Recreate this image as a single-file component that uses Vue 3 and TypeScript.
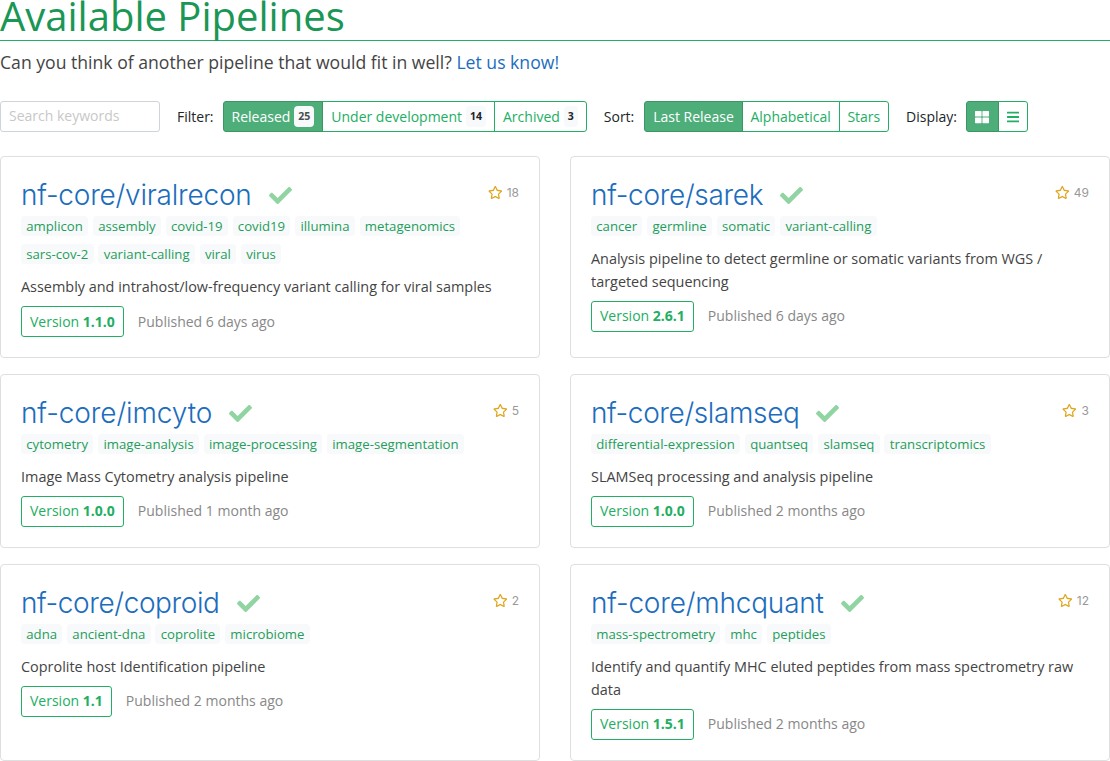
<script setup lang="ts">
interface Pipeline {
  name: string
  tracking: number
  stars: number
  tags: string[]
  description: string
  version: string
  published: string
}

const filters = [
  { label: 'Released', count: 25, active: true },
  { label: 'Under development', count: 14, active: false },
  { label: 'Archived', count: 3, active: false },
]

const sorts = [
  { label: 'Last Release', active: true },
  { label: 'Alphabetical', active: false },
  { label: 'Stars', active: false },
]

const pipelines: Pipeline[] = [
  {
    name: 'nf-core/viralrecon',
    tracking: -0.22,
    stars: 18,
    tags: ['amplicon', 'assembly', 'covid-19', 'covid19', 'illumina', 'metagenomics', 'sars-cov-2', 'variant-calling', 'viral', 'virus'],
    description: 'Assembly and intrahost/low-frequency variant calling for viral samples',
    version: '1.1.0',
    published: '6 days ago',
  },
  {
    name: 'nf-core/sarek',
    tracking: -0.31,
    stars: 49,
    tags: ['cancer', 'germline', 'somatic', 'variant-calling'],
    description: 'Analysis pipeline to detect germline or somatic variants from WGS / targeted sequencing',
    version: '2.6.1',
    published: '6 days ago',
  },
  {
    name: 'nf-core/imcyto',
    tracking: -0.1,
    stars: 5,
    tags: ['cytometry', 'image-analysis', 'image-processing', 'image-segmentation'],
    description: 'Image Mass Cytometry analysis pipeline',
    version: '1.0.0',
    published: '1 month ago',
  },
  {
    name: 'nf-core/slamseq',
    tracking: -0.38,
    stars: 3,
    tags: ['differential-expression', 'quantseq', 'slamseq', 'transcriptomics'],
    description: 'SLAMSeq processing and analysis pipeline',
    version: '1.0.0',
    published: '2 months ago',
  },
  {
    name: 'nf-core/coproid',
    tracking: -0.4,
    stars: 2,
    tags: ['adna', 'ancient-dna', 'coprolite', 'microbiome'],
    description: 'Coprolite host Identification pipeline',
    version: '1.1',
    published: '2 months ago',
  },
  {
    name: 'nf-core/mhcquant',
    tracking: -0.2,
    stars: 12,
    tags: ['mass-spectrometry', 'mhc', 'peptides'],
    description: 'Identify and quantify MHC eluted peptides from mass spectrometry raw data',
    version: '1.5.1',
    published: '2 months ago',
  },
]
</script>

<template>
  <main class="page">
    <h1>Available Pipelines</h1>
    <p class="lead">Can you think of another pipeline that would fit in well? <a href="#">Let us know!</a></p>

    <div class="toolbar">
      <input class="search" type="text" placeholder="Search keywords">
      <span class="label">Filter:</span>
      <div class="group">
        <button v-for="f in filters" :key="f.label" class="btn" :class="{ active: f.active }">
          {{ f.label }} <span class="count">{{ f.count }}</span>
        </button>
      </div>
      <span class="label sort-label">Sort:</span>
      <div class="group">
        <button v-for="s in sorts" :key="s.label" class="btn sort-btn" :class="{ active: s.active }">{{ s.label }}</button>
      </div>
      <span class="label">Display:</span>
      <div class="group">
        <button class="btn active icon-btn" aria-label="Grid">
          <svg width="14" height="14" viewBox="0 0 512 512" fill="currentColor">
            <path d="M296 32h192c13.255 0 24 10.745 24 24v160c0 13.255-10.745 24-24 24H296c-13.255 0-24-10.745-24-24V56c0-13.255 10.745-24 24-24zm-80 0H24C10.745 32 0 42.745 0 56v160c0 13.255 10.745 24 24 24h192c13.255 0 24-10.745 24-24V56c0-13.255-10.745-24-24-24zM0 296v160c0 13.255 10.745 24 24 24h192c13.255 0 24-10.745 24-24V296c0-13.255-10.745-24-24-24H24c-13.255 0-24 10.745-24 24zm296 184h192c13.255 0 24-10.745 24-24V296c0-13.255-10.745-24-24-24H296c-13.255 0-24 10.745-24 24v160c0 13.255 10.745 24 24 24z" />
          </svg>
        </button>
        <button class="btn icon-btn" aria-label="List">
          <svg width="12.25" height="14" viewBox="0 0 448 512" fill="currentColor">
            <path d="M16 132h416c8.837 0 16-7.163 16-16V76c0-8.837-7.163-16-16-16H16C7.163 60 0 67.163 0 76v40c0 8.837 7.163 16 16 16zm0 160h416c8.837 0 16-7.163 16-16v-40c0-8.837-7.163-16-16-16H16c-8.837 0-16 7.163-16 16v40c0 8.837 7.163 16 16 16zm0 160h416c8.837 0 16-7.163 16-16v-40c0-8.837-7.163-16-16-16H16c-8.837 0-16 7.163-16 16v40c0 8.837 7.163 16 16 16z" />
          </svg>
        </button>
      </div>
    </div>

    <div class="cards">
      <article v-for="p in pipelines" :key="p.name" class="card">
        <header class="card-head">
          <a class="name" href="#" :style="{ letterSpacing: p.tracking + 'px' }">{{ p.name }}</a>
          <svg class="check" width="23" height="23" viewBox="0 0 512 512" fill="currentColor">
            <path d="M173.898 439.404l-166.4-166.4c-9.997-9.997-9.997-26.206 0-36.204l36.203-36.204c9.997-9.998 26.207-9.998 36.204 0L192 312.69 432.095 72.596c9.997-9.997 26.207-9.997 36.204 0l36.203 36.204c9.997 9.997 9.997 26.206 0 36.204l-294.4 294.401c-9.998 9.997-26.207 9.997-36.204-.001z" />
          </svg>
          <span class="stars">
            <svg width="14.6" height="13" viewBox="0 0 576 512" fill="currentColor">
              <path d="M528.1 171.5L382 150.2 316.7 17.8c-11.7-23.6-45.6-23.9-57.4 0L194 150.2 47.9 171.5c-26.2 3.8-36.7 36.1-17.7 54.6l105.7 103-25 145.5c-4.5 26.3 23.2 46 46.4 33.7L288 439.6l130.7 68.7c23.2 12.2 50.9-7.4 46.4-33.7l-25-145.5 105.7-103c19-18.5 8.5-50.8-17.7-54.6zM388.6 312.3l23.7 138.4L288 385.4l-124.3 65.3 23.7-138.4-100.6-98 139-20.2 62.2-126 62.2 126 139 20.2-100.6 98z" />
            </svg>
            {{ p.stars }}
          </span>
        </header>
        <div class="tags">
          <span v-for="t in p.tags" :key="t" class="tag">{{ t }}</span>
        </div>
        <p class="description">{{ p.description }}</p>
        <div class="release">
          <a class="btn version" href="#">Version <b>{{ p.version }}</b></a>
          <span class="published">Published {{ p.published }}</span>
        </div>
      </article>
    </div>
  </main>
</template>

<style>
body {
  margin: 0;
  background: #fff;
  overflow: hidden;
}
</style>

<style scoped>
.page {
  box-sizing: border-box;
  width: 1110px;
  font-family: "Open Sans", "Noto Sans", sans-serif;
  font-size: 16px;
  line-height: 1.5;
  color: #212529;
}
.page * {
  box-sizing: border-box;
}
a {
  color: #1c6dbd;
  text-decoration: none;
}
h1 {
  height: 41px;
  margin: 0;
  border-bottom: 1px solid #22ae63;
  color: #1a9655;
  font-size: 40px;
  font-weight: 400;
  line-height: 31px;
}
.lead {
  margin: 8px 0 0;
  color: #444;
  font-size: 17.62px;
  line-height: 27px;
}
.toolbar {
  display: flex;
  align-items: center;
  height: 31px;
  margin-top: 25px;
  font-size: 14px;
}
.search {
  width: 160px;
  height: 31px;
  margin: 0;
  padding: 3px 8px 5px;
  border: 1px solid #ced4da;
  border-radius: 3px;
  font: inherit;
  background: #fff;
}
.search::placeholder {
  color: #c8c8c8;
  opacity: 1;
}
.label {
  margin: 0 9px 0 17px;
}
.sort-label {
  margin-right: 10px;
}
.group {
  display: flex;
}
.btn {
  display: flex;
  align-items: center;
  height: 31px;
  margin: 0;
  padding: 0 8px;
  border: 1px solid #22ae63;
  background: #fff;
  color: #22ae63;
  font: inherit;
  font-size: 14px;
  line-height: 21px;
  white-space: pre;
}
.group .btn + .btn {
  margin-left: -1px;
}
.group .btn:first-child {
  border-radius: 3px 0 0 3px;
}
.group .btn:last-child {
  border-radius: 0 3px 3px 0;
}
.btn.active {
  position: relative;
  border-color: #3a9764;
  background: #4eae7a;
  color: #fff;
}
.sort-btn {
  padding: 0 7.85px;
}
.icon-btn {
  padding: 0 8.3px;
}
.icon-btn svg {
  display: block;
}
.count {
  height: 21px;
  margin-left: 0.3px;
  padding: 0 4px;
  border-radius: 4px;
  background: #f8f9fa;
  color: #212529;
  font-size: 10.5px;
  font-weight: 700;
}
.active .count {
  color: #4a4d50;
}
.cards {
  display: grid;
  grid-template-columns: 540px 540px;
  grid-template-rows: 202px 174px 197px;
  gap: 16px 30px;
  margin-top: 24px;
}
.card {
  padding: 20px;
  border: 1px solid #dfdfdf;
  border-radius: 4px;
}
.card-head {
  display: flex;
  align-items: center;
  height: 35px;
}
.name {
  margin-top: 2px;
  font-family: Inter, sans-serif;
  font-size: 28px;
  font-weight: 300;
  line-height: 35px;
}
.check {
  margin: 1px 0 0 17px;
  color: #90d4a1;
}
.stars {
  display: flex;
  align-items: center;
  gap: 4.5px;
  margin: -4px 0 0 auto;
  color: #999;
  font-family: Inter, sans-serif;
  font-size: 12px;
}
.stars svg {
  color: #dfa51c;
}
.tags {
  display: flex;
  flex-wrap: wrap;
  gap: 8.4px 4.8px;
  margin-top: 4px;
}
.tag {
  height: 20px;
  padding: 0 5.25px;
  border-radius: 4px;
  background: #f8f9fa;
  color: #1f9d5a;
  font-size: 13.2px;
  line-height: 20px;
}
.description {
  margin: 11px 0 7.55px;
  color: #444;
  font-size: 14.43px;
  line-height: 23.04px;
}
.release {
  display: flex;
  align-items: center;
}
.version {
  padding-bottom: 0.8px;
  border-radius: 3px;
}
.published {
  margin-left: 14px;
  padding-bottom: 0.8px;
  color: #888;
  font-size: 14.03px;
  line-height: 21px;
}
</style>
